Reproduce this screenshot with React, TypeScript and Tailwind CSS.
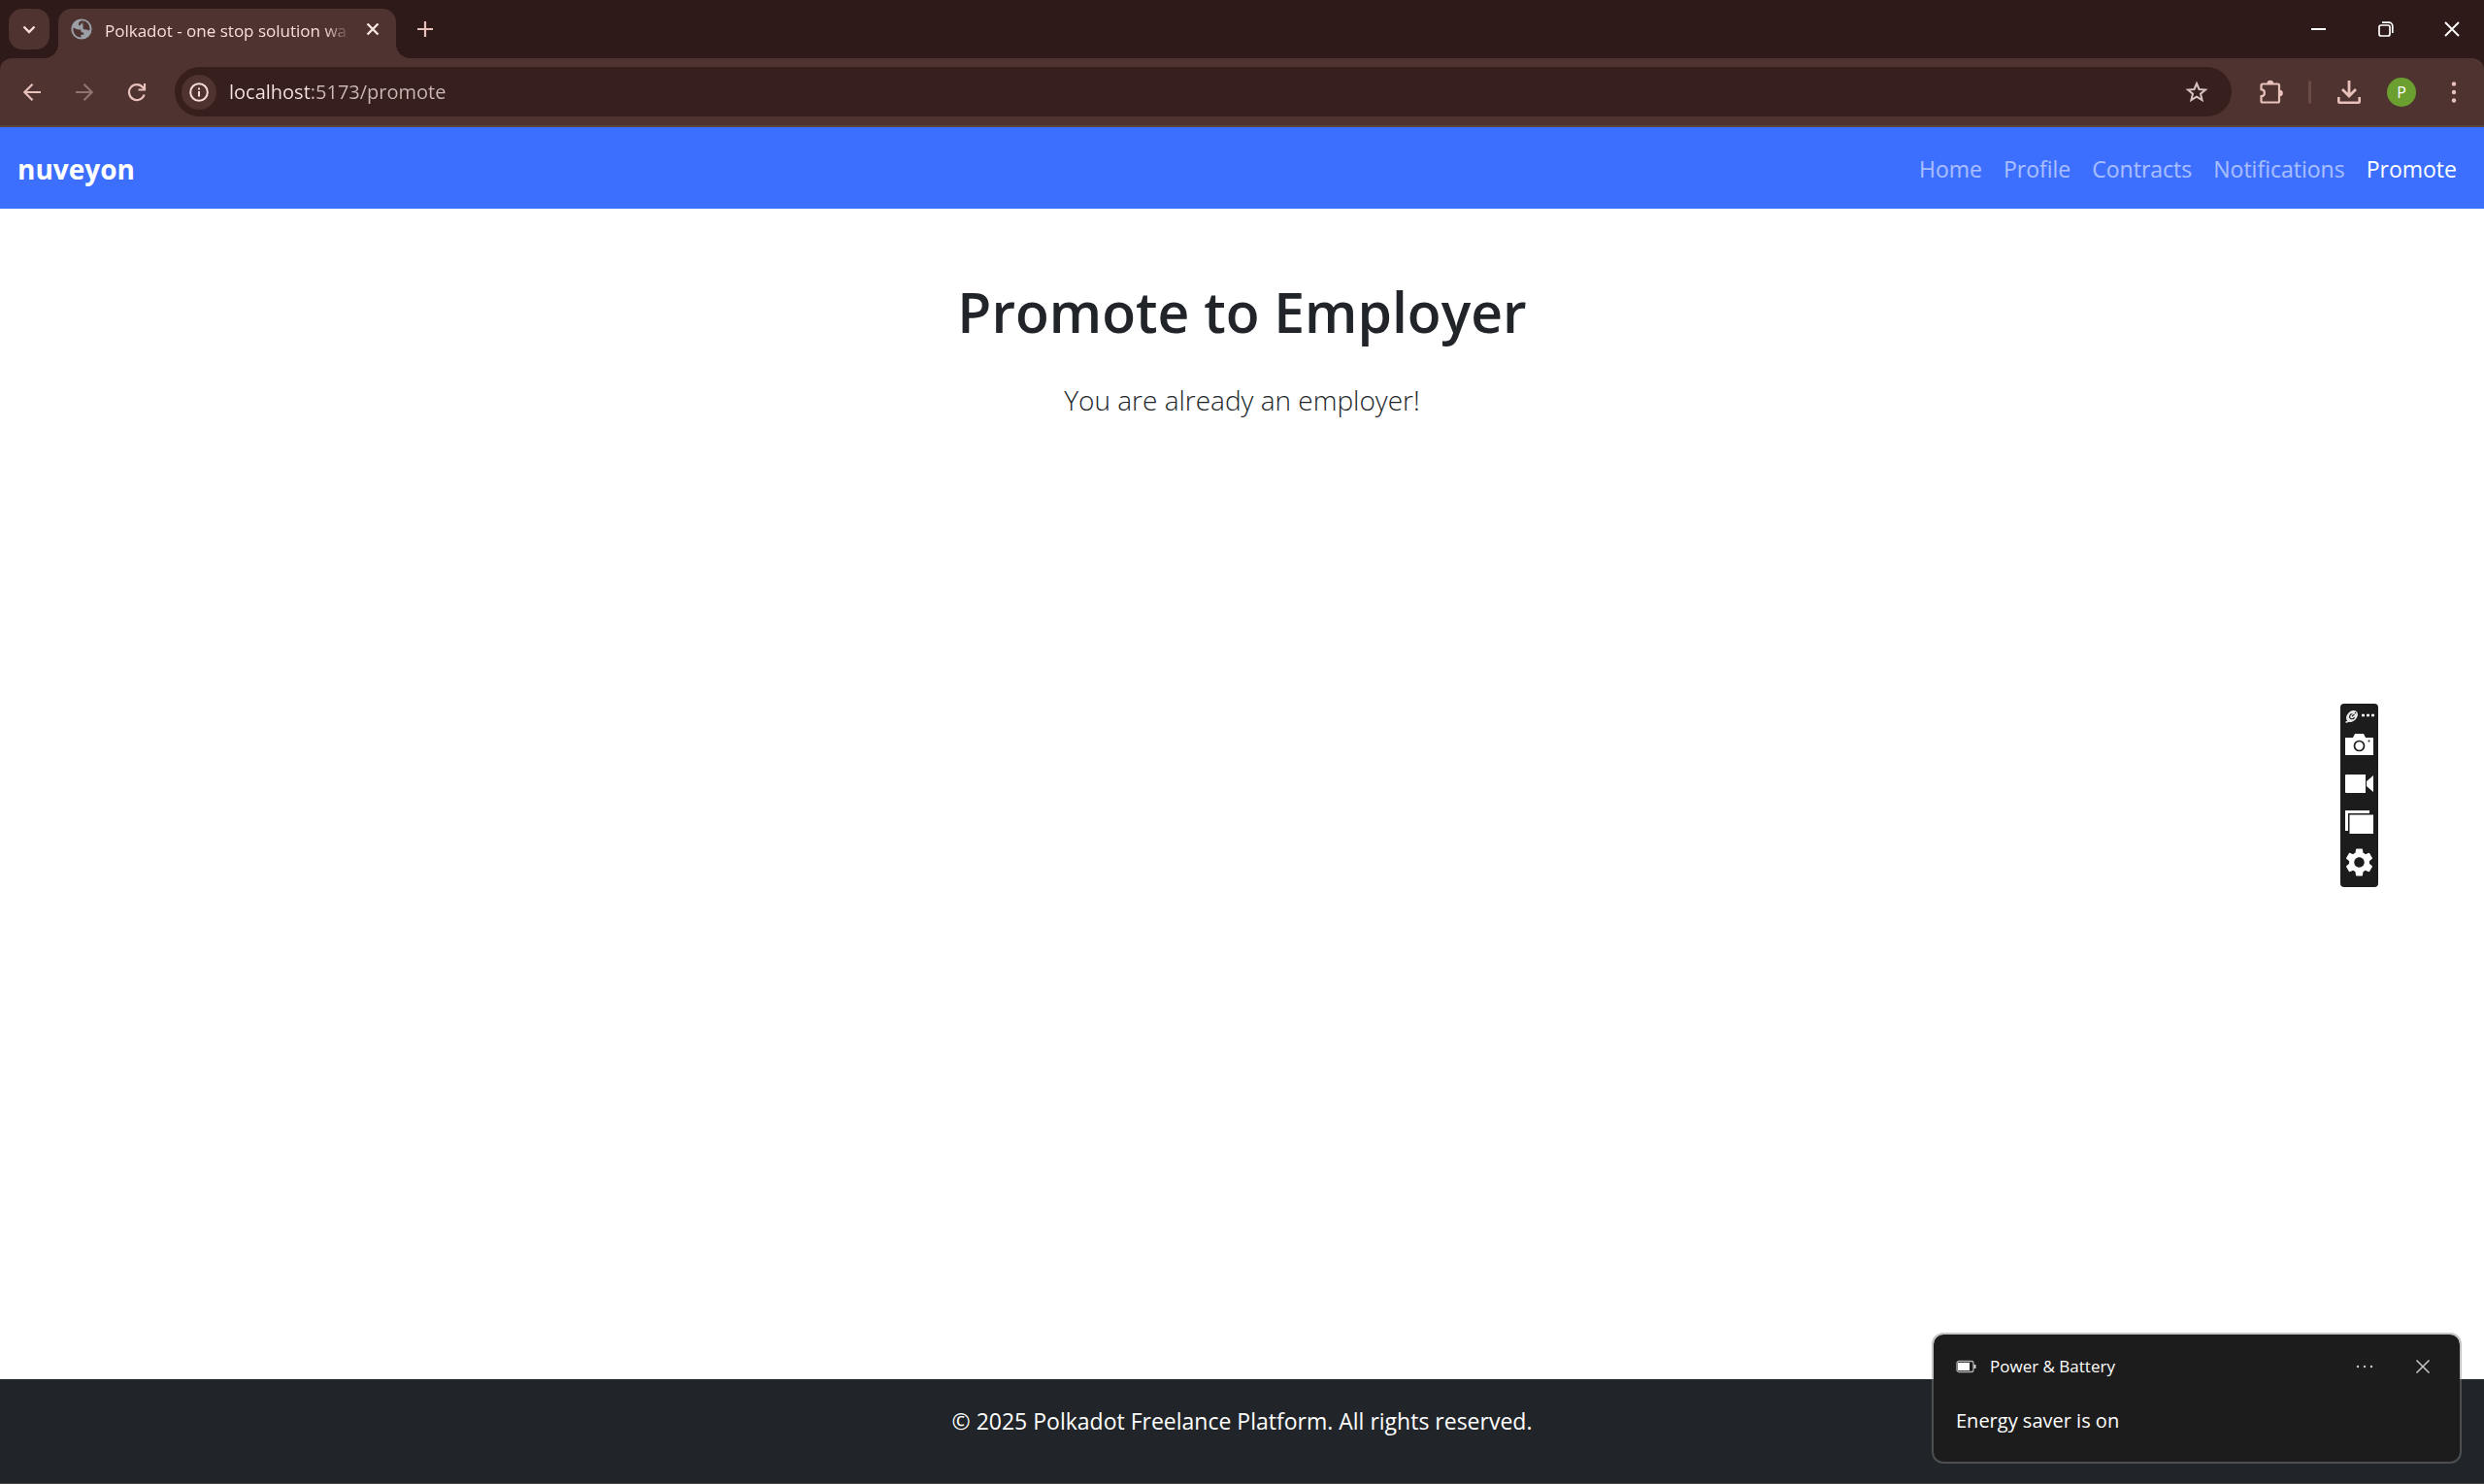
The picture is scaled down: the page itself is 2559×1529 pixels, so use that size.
import type { ReactNode } from "react";

const iconButton = "flex shrink-0 items-center justify-center";

function Svg({ size, box, children, className }: { size: number; box: string; children: ReactNode; className?: string }) {
  return (
    <svg width={size} height={size} viewBox={box} fill="none" className={className} aria-hidden="true">
      {children}
    </svg>
  );
}

function GlobeIcon() {
  return (
    <Svg size={22} box="0 0 22 22" className="shrink-0">
      <circle cx="11" cy="11" r="10.6" fill="#9aa0a6" />
      <path d="M2.4 9.6 7.2 11.4h3.2v1.4c0 1.2 1 1.8 1.8 1.8h1v2.2h-2.8v2.8C5.6 19.6 1.9 15.6 2.4 9.6z" fill="#4e3330" />
      <path d="M11.4 2.3C9.6 2.9 8 4 8 5.200v2h4.400v2.200c0 1.200 1 2 2 2h1.800c.8 0 1 .4 1.600 1l1.600-.4C20.200 7 16.500 2.200 11.400 2.300z" fill="#4e3330" />
      <path d="M12.500 2.300c1 1.500.2 2.900-.9 3.300H10v2H7.500v2h4.800" fill="#9aa0a6" />
    </Svg>
  );
}

function WindowControls() {
  return (
    <div className="flex h-full text-white">
      <button aria-label="Minimize" className={`${iconButton} w-[69px]`}>
        <Svg size={16} box="0 0 16 16"><path d="M0 8h15" stroke="currentColor" strokeWidth="2" /></Svg>
      </button>
      <button aria-label="Restore" className={`${iconButton} w-[69px]`}>
        <Svg size={16} box="0 0 16 16">
          <rect x="1" y="4" width="11" height="11" rx="2" stroke="currentColor" strokeWidth="1.700" />
          <path d="M4 1.200h7a3.800 3.800 0 0 1 3.800 3.800v7" stroke="currentColor" strokeWidth="1.700" />
        </Svg>
      </button>
      <button aria-label="Close window" className={`${iconButton} w-[67px]`}>
        <Svg size={16} box="0 0 16 16"><path d="M1 1l14 14M15 1 1 15" stroke="currentColor" strokeWidth="1.900" /></Svg>
      </button>
    </div>
  );
}

function TabStrip() {
  return (
    <div className="flex h-[60px] items-center pl-[9px]">
      <button aria-label="Search tabs" className={`${iconButton} size-[42px] rounded-[14px] bg-[#4e3330] text-[#f5dedb]`}>
        <Svg size={14} box="0 0 14 14"><path d="M1.500 4.500 7 10l5.500-5.500" stroke="currentColor" strokeWidth="2.400" /></Svg>
      </button>
      <div className="relative ml-[9px] flex h-[51px] w-[348px] items-center self-end rounded-t-[14px] bg-[#4e3330] pr-[15px] pb-[9px] pl-[13px]">
        <span className="absolute bottom-0 -left-[15px] size-[15px] bg-[radial-gradient(circle_at_top_left,transparent_15px,#4e3330_15px)]" />
        <span className="absolute -right-[15px] bottom-0 size-[15px] bg-[radial-gradient(circle_at_top_right,transparent_15px,#4e3330_15px)]" />
        <GlobeIcon />
        <span className="mt-[3px] ml-[13px] flex-1 text-[17px] whitespace-nowrap text-[#f5dedb] [mask-image:linear-gradient(to_right,black_225px,transparent_254px)]">
          Polkadot - one stop solution wa
        </span>
        <button aria-label="Close tab" className={`${iconButton} size-[18px] text-[#f9e6e3]`}>
          <Svg size={14} box="0 0 14 14"><path d="M1.500 1.500l11 11M12.500 1.500l-11 11" stroke="currentColor" strokeWidth="2.400" /></Svg>
        </button>
      </div>
      <button aria-label="New tab" className={`${iconButton} ml-[15px] size-[30px] text-[#e8c1bb]`}>
        <Svg size={16} box="0 0 16 16"><path d="M8 0v16M0 8h16" stroke="currentColor" strokeWidth="2.200" /></Svg>
      </button>
      <div className="ml-auto h-full"><WindowControls /></div>
    </div>
  );
}

function Toolbar() {
  return (
    <div className="flex h-[71px] items-center rounded-t-[12px] border-b-2 border-[#5a4441] bg-[#4e3330] pl-[12px] text-[#e8c1bb]">
      <button aria-label="Back" className={`${iconButton} size-[42px]`}>
        <Svg size={20} box="0 0 20 20"><path d="M19 10H2.500M10.500 1.800 2.300 10l8.200 8.200" stroke="currentColor" strokeWidth="2.200" /></Svg>
      </button>
      <button aria-label="Forward" className={`${iconButton} ml-[12px] size-[42px] text-[#8f7370]`}>
        <Svg size={20} box="0 0 20 20"><path d="M1 10h16.500M9.500 1.800 17.700 10l-8.200 8.200" stroke="currentColor" strokeWidth="2.200" /></Svg>
      </button>
      <button aria-label="Reload" className={`${iconButton} ml-[12px] size-[42px]`}>
        <Svg size={20} box="0 0 20 20">
          <path d="M17.600 12.500A8 8 0 1 1 16.200 5l1.800 2.200" stroke="currentColor" strokeWidth="2.200" />
          <path d="M18 1v6.500h-6.500" stroke="currentColor" strokeWidth="2.200" />
        </Svg>
      </button>
      <div className="ml-[18px] flex h-[51px] flex-1 items-center rounded-full bg-[#371f1d] pr-[24px] pl-[7px]">
        <button aria-label="View site information" className={`${iconButton} size-[36px] rounded-full bg-[#4e3330] text-[#f5dedb]`}>
          <Svg size={20} box="0 0 20 20">
            <circle cx="10" cy="10" r="8.800" stroke="currentColor" strokeWidth="2" />
            <path d="M10 9v5.500M10 5.500v2" stroke="currentColor" strokeWidth="2" />
          </Svg>
        </button>
        <input
          aria-label="Address"
          defaultValue="localhost:5173/promote"
          className="ml-[13px] h-[32px] min-w-0 flex-1 bg-transparent bg-clip-text p-0 text-[20px] leading-[32px] text-transparent outline-none [background-image:linear-gradient(to_right,#f9e6e3_83px,#cdb8b5_83px)]"
        />
        <button aria-label="Bookmark this tab" className={`${iconButton} size-[24px] text-[#d8c2bf]`}>
          <Svg size={24} box="0 0 24 24">
            <path d="m12 3 2.500 6 6.500.500-5 4.200 1.600 6.400L12 16.700l-5.600 3.400L8 13.700 3 9.500 9.500 9z" stroke="currentColor" strokeWidth="2" />
          </Svg>
        </button>
      </div>
      <button aria-label="Extensions" className={`${iconButton} ml-[20px] size-[42px]`}>
        <Svg size={27} box="0 0 27 27">
          <path d="M4 5.500h15.500a1.500 1.500 0 0 1 1.500 1.500v16a1.500 1.500 0 0 1-1.500 1.500H4A1.500 1.500 0 0 1 2.500 23v-4.800c4.500-.3 4.500-6.700 0-7V7A1.500 1.500 0 0 1 4 5.500z" stroke="currentColor" strokeWidth="2.200" />
          <path d="M8.500 5a3.300 3.300 0 0 1 6.600 0zM21.500 11.700a3.300 3.300 0 0 1 0 6.600z" fill="currentColor" />
        </Svg>
      </button>
      <span className="ml-[17px] h-[24px] w-[3px] rounded-full bg-[#6b4b48]" />
      <button aria-label="Downloads" className={`${iconButton} ml-[18px] size-[42px]`}>
        <Svg size={26} box="0 0 26 26">
          <path d="M13 1v15M6 10l7 7 7-7" stroke="currentColor" strokeWidth="2.800" />
          <path d="M2.300 18v4.700a1 1 0 0 0 1 1h19.400a1 1 0 0 0 1-1V18" stroke="currentColor" strokeWidth="2.600" />
        </Svg>
      </button>
      <button aria-label="Profile P" className={`${iconButton} ml-[18px] size-[30px] rounded-full bg-[#6b9f2f] text-[16px] text-white`}>
        P
      </button>
      <button aria-label="Browser menu" className={`${iconButton} mr-[10px] ml-[18px] size-[42px]`}>
        <Svg size={24} box="0 0 24 24">
          <circle cx="12" cy="3.500" r="2.200" fill="currentColor" />
          <circle cx="12" cy="12" r="2.200" fill="currentColor" />
          <circle cx="12" cy="20.500" r="2.200" fill="currentColor" />
        </Svg>
      </button>
    </div>
  );
}

const links = ["Home", "Profile", "Contracts", "Notifications", "Promote"];

function SiteNav() {
  return (
    <nav className="flex h-[84px] items-center justify-between bg-[#3d6fff] pt-[2px] pr-[17px] pl-[18px]">
      <a href="#home" className="text-[28px] leading-[42px] font-bold text-white">nuveyon</a>
      <ul className="flex">
        {links.map((name) => (
          <li key={name}>
            <a
              href={`#${name.toLowerCase()}`}
              className={`block px-[11px] text-[23px] leading-[36px] ${name === "Promote" ? "text-white" : "text-white/55"}`}
            >
              {name}
            </a>
          </li>
        ))}
      </ul>
    </nav>
  );
}

function CaptureBar() {
  return (
    <aside aria-label="Capture tools" className="absolute top-[725px] right-[109px] flex w-[39px] flex-col items-center rounded-[4px] bg-[#1c1c1c] pt-[5px] pb-[11px] text-white">
      <div className="flex h-[15px] items-center gap-[3px]">
        <Svg size={14} box="0 0 14 14">
          <ellipse cx="7" cy="7" rx="6.800" ry="5" transform="rotate(-45 7 7)" fill="#e8e8e8" />
          <path d="M7.500 4.800A2.500 2.500 0 1 0 9.500 8M7 7.200 9.500 4.800" stroke="#1c1c1c" strokeWidth="1.100" />
          <circle cx="10.500" cy="3.500" r="0.800" fill="#1c1c1c" />
          <path d="M0.500 13.300l3.500-1.300" stroke="#e8e8e8" strokeWidth="1.500" />
        </Svg>
        <Svg size={13} box="0 0 13 13"><path d="M0 6h3M5 6h3M10 6h3" stroke="currentColor" strokeWidth="2.500" /></Svg>
      </div>
      <button aria-label="Take screenshot" className="mt-[11px]">
        <svg width="29" height="22" viewBox="0 0 29 22" aria-hidden="true" className="block">
          <path d="M0 4h8l2-4h9l2 4h8v18H0z" fill="currentColor" />
          <circle cx="14.500" cy="12.500" r="5" fill="none" stroke="#1c1c1c" strokeWidth="1.700" />
          <circle cx="24.500" cy="7.500" r="1" fill="#1c1c1c" />
        </svg>
      </button>
      <button aria-label="Record video" className="mt-[20px]">
        <svg width="29" height="19" viewBox="0 0 29 19" aria-hidden="true" className="block">
          <path d="M1 0h20v19H1a1 1 0 0 1-1-1V1a1 1 0 0 1 1-1zM22 7l7-6v17l-7-6z" fill="currentColor" />
        </svg>
      </button>
      <button aria-label="Gallery" className="mt-[18px]">
        <svg width="29" height="24" viewBox="0 0 29 24" aria-hidden="true" className="block">
          <path d="M0 0h25v3H3v18H0zM4.500 4.500H29V24H4.500z" fill="currentColor" />
        </svg>
      </button>
      <button aria-label="Settings" className="mt-[15px]">
        <svg width="29" height="29" viewBox="2.200 2 19.600 20" aria-hidden="true" className="block">
          <path
            fill="currentColor"
            d="M19.140 12.940c.040-.300.060-.610.060-.940 0-.320-.020-.640-.070-.940l2.030-1.580a.490.490 0 0 0 .120-.610l-1.920-3.320a.488.488 0 0 0-.590-.220l-2.390.960c-.500-.380-1.030-.700-1.620-.940l-.360-2.540a.484.484 0 0 0-.480-.410h-3.840c-.240 0-.430.170-.470.410l-.360 2.540c-.590.240-1.130.570-1.620.940l-2.390-.960c-.220-.080-.470 0-.590.220L2.740 8.870c-.120.210-.080.470.120.610l2.030 1.580c-.050.300-.090.630-.090.940s.020.640.070.940l-2.030 1.580a.490.490 0 0 0-.120.610l1.920 3.320c.120.220.370.290.590.220l2.390-.960c.500.380 1.030.700 1.620.940l.360 2.540c.050.240.240.410.480.410h3.840c.240 0 .440-.170.470-.410l.360-2.540c.590-.240 1.130-.560 1.620-.940l2.390.960c.220.080.470 0 .590-.220l1.920-3.320c.120-.220.070-.470-.120-.610l-2.010-1.580zM12 15.600c-1.980 0-3.600-1.620-3.600-3.600s1.620-3.600 3.600-3.600 3.600 1.620 3.600 3.600-1.620 3.600-3.600 3.600z"
          />
        </svg>
      </button>
    </aside>
  );
}

function Toast() {
  return (
    <section
      role="status"
      className="absolute right-[23px] bottom-[21px] h-[135px] w-[546px] rounded-[12px] border-2 border-[#808080]/45 bg-[#1c1c1c] bg-clip-padding pr-[20px] pl-[23px] text-white"
    >
      <div className="flex h-[66px] items-center">
        <svg width="22" height="14" viewBox="0 0 22 14" aria-hidden="true">
          <rect x="1" y="1.500" width="17" height="11" rx="2" fill="none" stroke="#b0b0b0" strokeWidth="1.300" />
          <rect x="2" y="3" width="12" height="8" fill="#fff" />
          <path d="M19.500 5v4" stroke="#d0d0d0" strokeWidth="2" />
        </svg>
        <h2 className="ml-[13px] text-[17px] leading-[24px]">Power &amp; Battery</h2>
        <button aria-label="More options" className={`${iconButton} ml-auto size-[36px] text-[#c8c8c8]`}>
          <Svg size={18} box="0 0 18 18">
            <circle cx="2" cy="9" r="1.200" fill="currentColor" />
            <circle cx="9" cy="9" r="1.200" fill="currentColor" />
            <circle cx="16" cy="9" r="1.200" fill="currentColor" />
          </Svg>
        </button>
        <button aria-label="Dismiss" className={`${iconButton} ml-[24px] size-[36px] text-[#c8c8c8]`}>
          <Svg size={16} box="0 0 16 16"><path d="M1.500 1.500l13 13M14.500 1.500l-13 13" stroke="currentColor" strokeWidth="1.500" /></Svg>
        </button>
      </div>
      <p className="mt-[8px] text-[20px] leading-[30px]">Energy saver is on</p>
    </section>
  );
}

export default function App() {
  return (
    <div className="relative flex min-h-screen flex-col bg-white font-['Open_Sans','Noto_Sans',sans-serif]">
      <header className="bg-[#2e1a18]">
        <TabStrip />
        <Toolbar />
      </header>
      <SiteNav />
      <main className="flex-1 pt-[70px] text-center text-[#212529]">
        <h1 className="text-[57px] leading-[72px] font-semibold">Promote to Employer</h1>
        <p className="mt-[33px] text-[28px] leading-[45px] font-light">You are already an employer!</p>
      </main>
      <footer className="h-[108px] border-b border-[#454545] bg-[#212529] pt-[25px] text-center text-[23px] leading-[36px] text-white">
        © 2025 Polkadot Freelance Platform. All rights reserved.
      </footer>
      <CaptureBar />
      <Toast />
    </div>
  );
}
